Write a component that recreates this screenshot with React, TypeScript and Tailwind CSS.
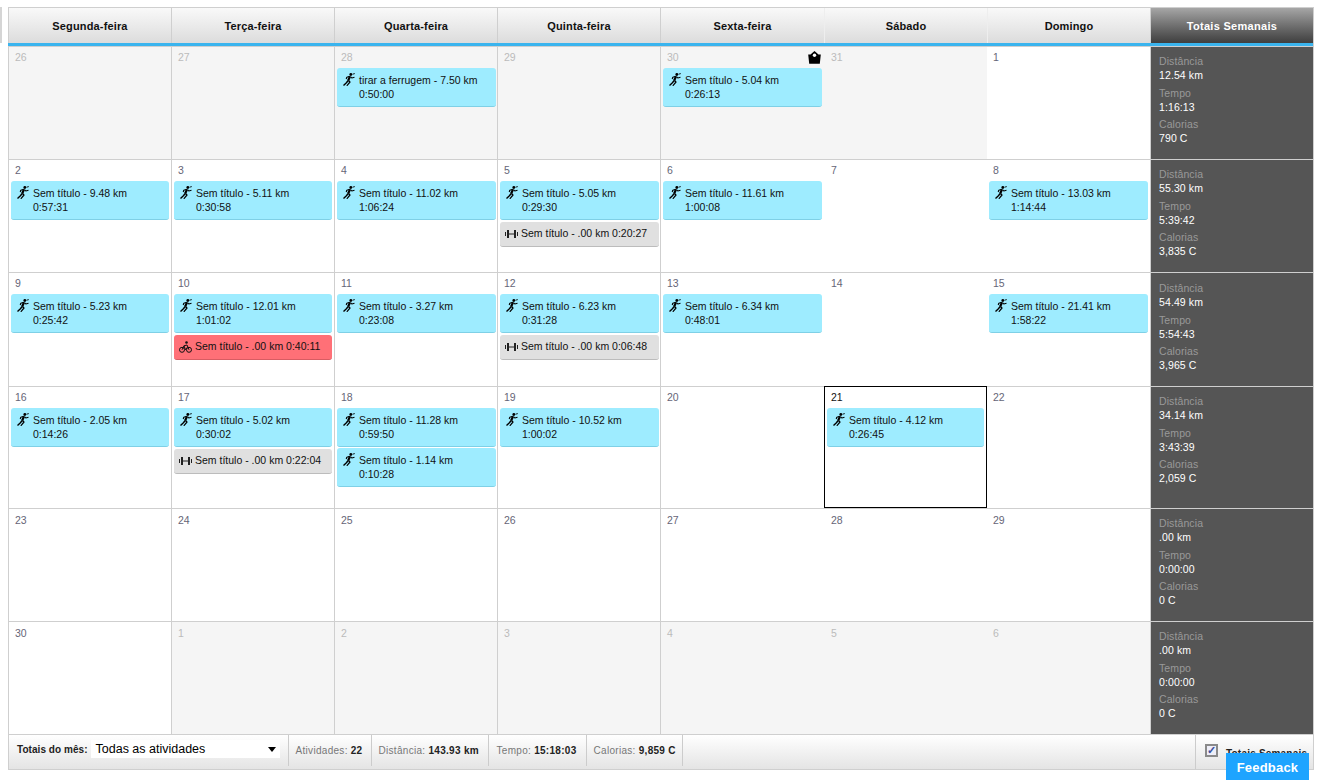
import React from 'react';

type Ev = { kind: 'run' | 'gym' | 'bike'; title?: string; km: string; time: string };
type Day = { n: number; off?: boolean; events?: Ev[]; today?: boolean; mail?: boolean };
type Week = { h: string; numPt?: string; totalsPt?: string; days: Day[]; totals: string[] };

const run = (km: string, time: string, title = 'Sem título'): Ev => ({ kind: 'run', title, km, time });
const gym = (time: string): Ev => ({ kind: 'gym', km: '.00', time });
const bike = (time: string): Ev => ({ kind: 'bike', km: '.00', time });

const headers = ['Segunda-feira', 'Terça-feira', 'Quarta-feira', 'Quinta-feira', 'Sexta-feira', 'Sábado', 'Domingo'];

const weeks: Week[] = [
  {
    h: 'h-[113px]',
    totals: ['12.54 km', '1:16:13', '790 C'],
    days: [
      { n: 26, off: true },
      { n: 27, off: true },
      { n: 28, off: true, events: [run('7.50', '0:50:00', 'tirar a ferrugem')] },
      { n: 29, off: true },
      { n: 30, off: true, mail: true, events: [run('5.04', '0:26:13')] },
      { n: 31, off: true },
      { n: 1 },
    ],
  },
  {
    h: 'h-[113px]',
    totals: ['55.30 km', '5:39:42', '3,835 C'],
    days: [
      { n: 2, events: [run('9.48', '0:57:31')] },
      { n: 3, events: [run('5.11', '0:30:58')] },
      { n: 4, events: [run('11.02', '1:06:24')] },
      { n: 5, events: [run('5.05', '0:29:30'), gym('0:20:27')] },
      { n: 6, events: [run('11.61', '1:00:08')] },
      { n: 7 },
      { n: 8, events: [run('13.03', '1:14:44')] },
    ],
  },
  {
    h: 'h-[114px]',
    totalsPt: 'pt-[8px]',
    totals: ['54.49 km', '5:54:43', '3,965 C'],
    days: [
      { n: 9, events: [run('5.23', '0:25:42')] },
      { n: 10, events: [run('12.01', '1:01:02'), bike('0:40:11')] },
      { n: 11, events: [run('3.27', '0:23:08')] },
      { n: 12, events: [run('6.23', '0:31:28'), gym('0:06:48')] },
      { n: 13, events: [run('6.34', '0:48:01')] },
      { n: 14 },
      { n: 15, events: [run('21.41', '1:58:22')] },
    ],
  },
  {
    h: 'h-[122px]',
    totals: ['34.14 km', '3:43:39', '2,059 C'],
    days: [
      { n: 16, events: [run('2.05', '0:14:26')] },
      { n: 17, events: [run('5.02', '0:30:02'), gym('0:22:04')] },
      { n: 18, events: [run('11.28', '0:59:50'), run('1.14', '0:10:28')] },
      { n: 19, events: [run('10.52', '1:00:02')] },
      { n: 20 },
      { n: 21, today: true, events: [run('4.12', '0:26:45')] },
      { n: 22 },
    ],
  },
  {
    h: 'h-[113px]',
    numPt: 'pt-[5px]',
    totals: ['.00 km', '0:00:00', '0 C'],
    days: [{ n: 23 }, { n: 24 }, { n: 25 }, { n: 26 }, { n: 27 }, { n: 28 }, { n: 29 }],
  },
  {
    h: 'h-[113px]',
    numPt: 'pt-[5px]',
    totals: ['.00 km', '0:00:00', '0 C'],
    days: [
      { n: 30 },
      { n: 1, off: true },
      { n: 2, off: true },
      { n: 3, off: true },
      { n: 4, off: true },
      { n: 5, off: true },
      { n: 6, off: true },
    ],
  },
];

const RunIcon = () => (
  <svg viewBox="0 0 12 13" className="w-[12px] h-[13px] shrink-0" fill="none" stroke="#000" strokeWidth="1.4" strokeLinejoin="round">
    <circle cx="7.800" cy="1.500" r="1.400" fill="#000" stroke="none" />
    <path d="M7 3.400 5.200 7.500" strokeWidth="2.200" />
    <path d="M6.800 3.200 3.800 4.200 3.200 6" strokeWidth="1.100" />
    <path d="M7.500 3.600 8.800 5 11.500 4.300" strokeWidth="1.100" />
    <path d="M9.500 1.200 11.800 0.600" strokeWidth="0.900" />
    <path d="M5.200 7.500 3.400 9.800 0.500 12.500" />
    <path d="M5.400 7.500 7 9 3.800 12.800" strokeWidth="1.200" />
  </svg>
);

const GymIcon = () => (
  <svg viewBox="0 0 13 10" className="w-[13px] h-[10px] shrink-0" fill="#222">
    <rect x="0" y="3" width="1" height="4" />
    <rect x="2" y="1" width="2" height="8" />
    <rect x="4" y="4.500" width="5" height="1" />
    <rect x="9" y="1" width="2" height="8" />
    <rect x="12" y="3" width="1" height="4" />
  </svg>
);

const BikeIcon = () => (
  <svg viewBox="0 0 13 12" className="w-[13px] h-[12px] shrink-0" fill="none" stroke="#111" strokeWidth="1">
    <circle cx="3" cy="8.800" r="2.500" />
    <circle cx="10" cy="8.800" r="2.500" />
    <path d="M3 8.800 5 4.800 8 4 10 8.800M6.500 8.800 5 4.800M6.500 8.800 8 6.500" />
    <circle cx="7.500" cy="1.500" r="1.300" fill="#111" stroke="none" />
  </svg>
);

const MailIcon = () => (
  <svg viewBox="0 0 13 13" className="w-[13px] h-[13px]" fill="#000">
    <path d="M6.500 0 10.500 3.500 12.800 3.500 11.800 12.800H1.200L0.200 3.500 2.500 3.500z" />
    <circle cx="6.500" cy="4.300" r="1.700" fill="#fff" />
  </svg>
);

const EventCard = ({ ev, tight }: { ev: Ev; tight?: boolean }) => {
  if (ev.kind === 'run') {
    return (
      <div className={`flex h-[39px] rounded-[3px] bg-[#9eecff] border-b border-[#7fd0e6] pl-[6px] pt-[5px] text-[#111] ${tight ? '-mt-[1px]' : ''}`}>
        <RunIcon />
        <div className="ml-[4px] leading-[14px]">
          <div className="whitespace-nowrap">
            {ev.title} - {ev.km} km
          </div>
          <div>{ev.time}</div>
        </div>
      </div>
    );
  }
  const tone = ev.kind === 'gym' ? 'bg-[#e0e0e0] border-[#bcbcbc]' : 'bg-[#ff7077] border-[#d85c62]';
  return (
    <div className={`flex items-center h-[25px] rounded-[3px] border-b pl-[5px] text-[#111] ${tone}`}>
      {ev.kind === 'gym' ? <GymIcon /> : <BikeIcon />}
      <span className="ml-[3px] whitespace-nowrap">
        Sem título - {ev.km} km {ev.time}
      </span>
    </div>
  );
};

const DayCell = ({ day, col, numPt }: { day: Day; col: number; numPt?: string }) => {
  const edge = col < 5 ? 'border-l border-[#cfcfcf]' : '';
  const pad = col === 5 ? 'px-[3px]' : col === 2 || col === 3 ? 'pl-[2px] pr-[1px]' : 'px-[2px]';
  return (
    <div className={`relative ${edge} ${day.off ? 'bg-[#f5f5f5]' : 'bg-white'}`}>
      {day.today && <div className="absolute left-0 -top-[1px] right-0 bottom-0 border border-black" />}
      <div className={`relative h-[20px] leading-[13px] ${numPt ?? 'pt-[4px]'} ${col === 5 ? 'pl-[7px]' : 'pl-[6px]'} ${day.today ? 'text-[#111]' : day.off ? 'text-[#bbbbbb]' : 'text-[#667]'}`}>
        {day.n}
      </div>
      {day.mail && (
        <div className="absolute right-[3px] top-[4px]">
          <MailIcon />
        </div>
      )}
      <div className={`relative flex flex-col gap-[2px] pt-[1px] ${pad}`}>
        {day.events?.map((ev, i) => (
          <EventCard key={i} ev={ev} tight={i > 0 && ev.kind === 'run'} />
        ))}
      </div>
    </div>
  );
};

const TotalsCell = ({ values, pt }: { values: string[]; pt?: string }) => (
  <div className={`bg-[#555555] border-l border-[#cfcfcf] pl-[8px] text-white tracking-[0.1px] ${pt ?? 'pt-[7px]'}`}>
    {['Distância', 'Tempo', 'Calorias'].map((label, i) => (
      <div key={label} className="h-[31.500px] leading-[14px]">
        <div className="text-[#999999]">{label}</div>
        <div>{values[i]}</div>
      </div>
    ))}
  </div>
);

const FooterStat = ({ label, value, w }: { label: string; value: string; w: string }) => (
  <div className={`flex items-center h-[31px] pl-[7px] border-r border-[#cccccc] whitespace-nowrap text-[10px] tracking-[0.3px] ${w}`}>
    <span className="text-[#777777] mr-[3px]">{label}</span>
    <b className="text-[#222]">{value}</b>
  </div>
);

export default function App() {
  return (
    <div className="relative w-[1320px] h-[780px] overflow-hidden bg-white pt-[7px] pl-[8px] text-[10.5px] font-['Liberation_Sans',Arial,sans-serif]">
      <div className="absolute left-0 top-[7px] h-[36px] w-[2px] bg-[#d5d5d5]" />

      <div className="w-[1306px] border-t border-r border-[#cfcfcf]">
        <div className="grid grid-cols-[163px_163px_163px_163px_164px_163px_163px_auto] h-[38px] border-b-[3px] border-[#3ab4ee]">
          {headers.map((h, i) => (
            <div
              key={h}
              className={`flex items-center justify-center pt-[1px] font-bold text-[11px] tracking-[0.15px] text-[#111] bg-gradient-to-b from-[#f9f9f9] to-[#dcdcdc] border-l ${i < 5 ? 'border-[#cfcfcf]' : 'border-[#eeeeee]'}`}
            >
              {h}
            </div>
          ))}
          <div className="flex items-center justify-center pt-[1px] font-bold text-[11px] tracking-[0.3px] text-white bg-gradient-to-b from-[#a6a6a6] to-[#3f3f3f] border-l border-[#cfcfcf]">
            Totais Semanais
          </div>
        </div>

        {weeks.map((w) => (
          <div key={w.days[0].n} className={`grid grid-cols-[163px_163px_163px_163px_164px_163px_163px_auto] border-t border-[#cfcfcf] ${w.h}`}>
            {w.days.map((d, i) => (
              <DayCell key={i} day={d} col={i} numPt={w.numPt} />
            ))}
            <TotalsCell values={w.totals} pt={w.totalsPt} />
          </div>
        ))}

        <div className="flex items-start h-[36px] border-t border-l border-b border-[#cfcfcf] bg-gradient-to-b from-white to-[#e4e4e4]">
          <b className="mt-[9px] ml-[8px] leading-[12px] text-[10px] tracking-[0.05px] text-[#222] whitespace-nowrap">Totais do mês:</b>
          <div className="flex items-center justify-between mt-[5px] ml-[3px] w-[189px] h-[18px] bg-white pl-[5px] pr-[4px] pt-[1px] text-[12.5px] text-black">
            Todas as atividades
            <span className="w-0 h-0 border-x-[4px] border-t-[5px] border-x-transparent border-t-black" />
          </div>
          <div className="w-[1px] h-[31px] bg-[#cccccc] ml-[8px]" />
          <FooterStat label="Atividades:" value="22" w="w-[83px]" />
          <FooterStat label="Distância:" value="143.93 km" w="w-[117px]" />
          <FooterStat label="Tempo:" value="15:18:03" w="w-[98px] pl-[8px]" />
          <FooterStat label="Calorias:" value="9,859 C" w="w-[96px]" />
          <div className="ml-auto flex items-start h-[34px] w-[118px] border-l border-[#cccccc] pl-[9px] pt-[9px]">
            <span className="flex items-center justify-center w-[13px] h-[13px] border-2 border-[#8a8a8a] bg-[#eeeef8] text-[#3b4fa0] text-[11px] font-bold leading-none">
              ✓
            </span>
            <b className="ml-[8px] mt-[4px] leading-[12px] text-[10px] tracking-[0.2px] text-[#222] whitespace-nowrap">Totais Semanais</b>
          </div>
        </div>
      </div>

      <div className="absolute left-[1226px] top-[753px] w-[83px] h-[27px] flex items-center justify-center pt-[3px] bg-[#1ea4ff] text-white font-bold text-[13px] tracking-[0.2px]">
        Feedback
      </div>
    </div>
  );
}
